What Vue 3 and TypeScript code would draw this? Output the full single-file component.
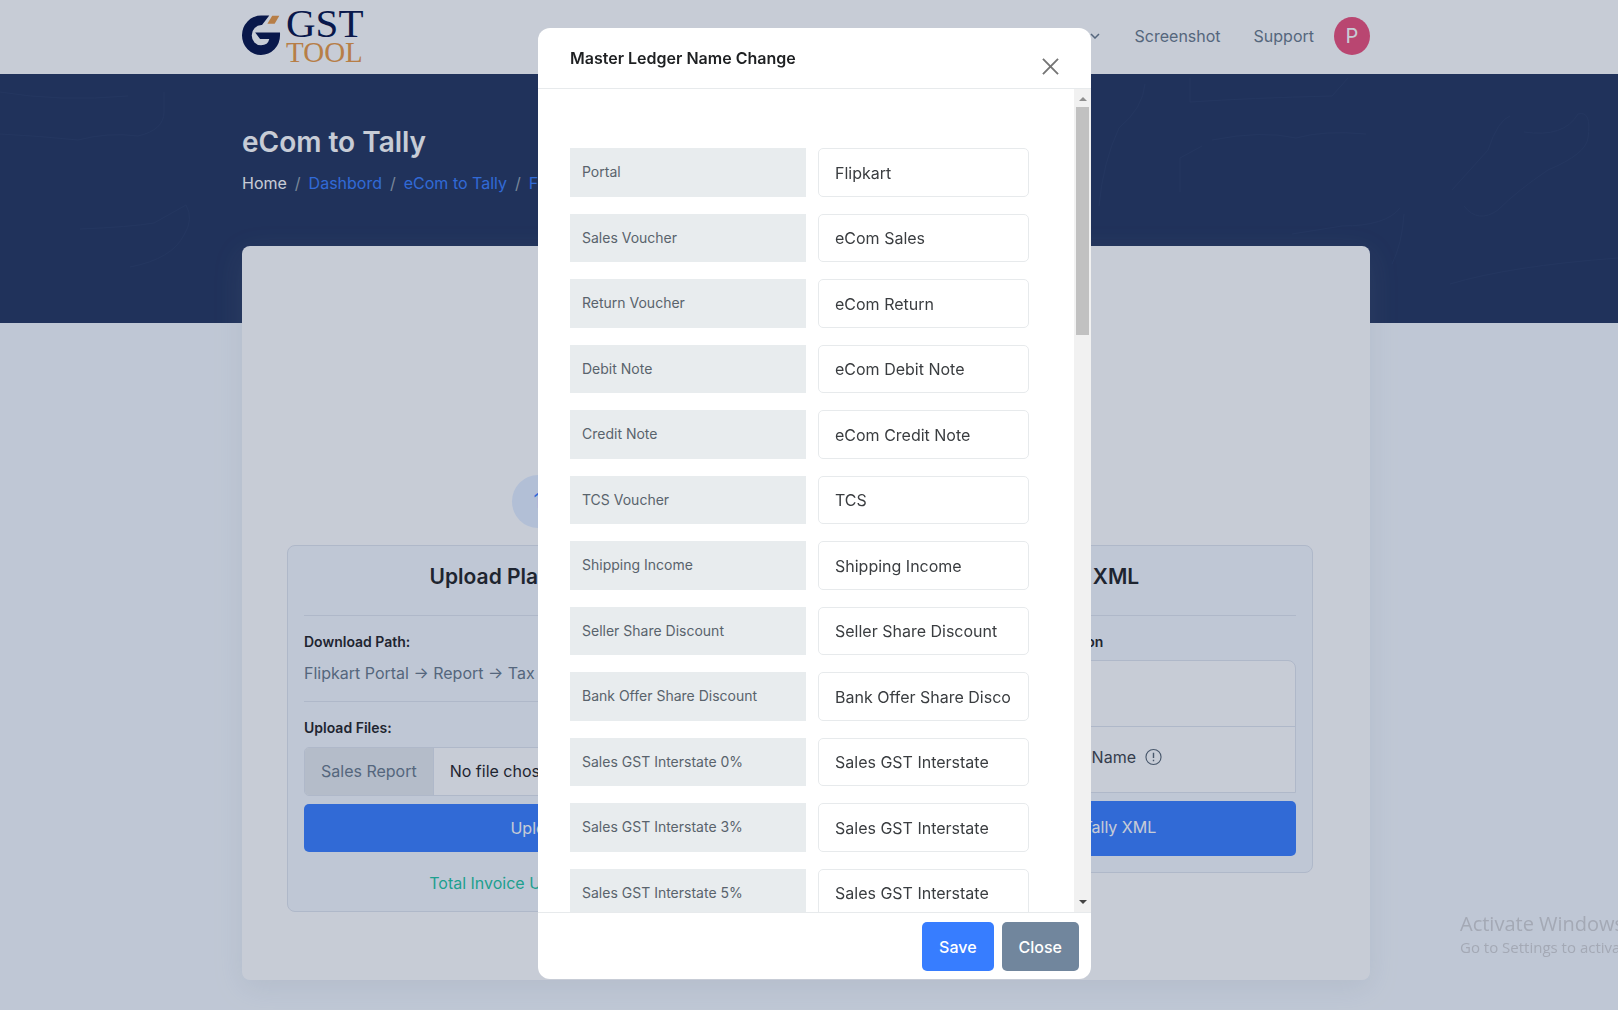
<script setup lang="ts">
import { reactive } from 'vue'

interface LedgerRow {
  label: string
  value: string
}

const crumbs: string[] = ['Dashbord', 'eCom to Tally', 'Flipkart']

const rows = reactive<LedgerRow[]>([
  { label: 'Portal', value: 'Flipkart' },
  { label: 'Sales Voucher', value: 'eCom Sales' },
  { label: 'Return Voucher', value: 'eCom Return' },
  { label: 'Debit Note', value: 'eCom Debit Note' },
  { label: 'Credit Note', value: 'eCom Credit Note' },
  { label: 'TCS Voucher', value: 'TCS' },
  { label: 'Shipping Income', value: 'Shipping Income' },
  { label: 'Seller Share Discount', value: 'Seller Share Discount' },
  { label: 'Bank Offer Share Discount', value: 'Bank Offer Share Discount' },
  { label: 'Sales GST Interstate 0%', value: 'Sales GST Interstate' },
  { label: 'Sales GST Interstate 3%', value: 'Sales GST Interstate' },
  { label: 'Sales GST Interstate 5%', value: 'Sales GST Interstate' },
])
</script>

<template>
  <div class="page">
    <header class="topbar">
      <div class="container topbar-inner">
        <a class="logo" href="#" aria-label="GST Tool">
          <svg class="logo-mark" viewBox="0 0 40 42" aria-hidden="true">
            <path
              d="M28 .5H19.5A19.5 20.3 0 0 0 0 21a19.5 20 0 0 0 39 0v-3H13.5l5 6.500h9.500a9 8 0 0 1-8.500 6.500A9.500 10 0 0 1 10 21a10 10.500 0 0 1 10.500-10.800z"
              fill="#020f46"
            />
            <path d="M31 .7h7.300L33.500 9H26z" fill="#ea9740" />
          </svg>
          <span class="logo-words">
            <span class="logo-gst">GST</span>
            <span class="logo-tool">TOOL</span>
          </span>
        </a>
        <nav class="nav">
          <button class="nav-more" type="button" aria-label="Open menu">
            <svg viewBox="0 0 10 6" aria-hidden="true">
              <path d="M1 1l4 4 4-4" fill="none" stroke="#677788" stroke-width="1.500" />
            </svg>
          </button>
          <a href="#">Screenshot</a>
          <a href="#">Support</a>
          <span class="avatar">P</span>
        </nav>
      </div>
    </header>

    <section class="hero">
      <svg class="hero-lines" viewBox="0 0 1618 249" preserveAspectRatio="none" aria-hidden="true">
        <g fill="none" stroke="#263862" stroke-width="1">
          <path d="M0 18q60 10 128 4M0 60q40 2 78 6 30-8 60-4 26-6 26-24V18" />
          <path d="M80 155q50-2 74-6l32-18q8 14-2 30-12 24-54 32" />
          <path d="M1145 10q-2 24-26 44-16 34-20 78M1190 4v24q60-4 142-6l16-18" />
          <path d="M1212 66q50-10 84-2 28-8 70-4M1180 118v-34l22-12" />
          <path d="M1452 116l36-40q10-30 22-34M1524 58q40 6 54-18 14-4 10 24-2 16-40 32-30 20-50 40-20 14-34-4" />
          <path d="M1292 160l50-8q44 0 58-18M1450 210q60-18 168-26M1392 190q10-20 12-50" />
        </g>
      </svg>
      <div class="container">
        <h1>eCom to Tally</h1>
        <nav class="crumbs" aria-label="Breadcrumb">
          <a class="home" href="#">Home</a>
          <template v-for="c in crumbs" :key="c">
            <span class="sep">/</span>
            <a href="#">{{ c }}</a>
          </template>
        </nav>
      </div>
    </section>

    <main class="container card">
      <div class="steps">
        <span class="step">1</span>
        <span class="step">2</span>
      </div>
      <div class="panels">
        <section class="panel">
          <h2>Upload Platform Files</h2>
          <hr />
          <h3>Download Path:</h3>
          <p class="path">Flipkart Portal → Report → Tax Report</p>
          <hr />
          <h3>Upload Files:</h3>
          <div class="file">
            <label for="sales-report">Sales Report</label>
            <input id="sales-report" type="file" />
          </div>
          <button class="primary" type="button">Upload</button>
          <p class="total">Total Invoice Uploaded : 260</p>
        </section>

        <section class="panel">
          <h2>Download XML</h2>
          <hr />
          <h3>Select Tally Ledger Configuration Option</h3>
          <ul class="options">
            <li></li>
            <li>
              <span>Master Ledger Name</span>
              <svg viewBox="0 0 18 18" aria-hidden="true">
                <circle cx="9" cy="9" r="8" fill="none" stroke="#566472" stroke-width="1.200" />
                <path d="M9 4.500v5.500M9 12v1.500" stroke="#566472" stroke-width="1.500" />
              </svg>
            </li>
          </ul>
          <button class="primary tall" type="button">Convert eCom Tally XML</button>
        </section>
      </div>
    </main>

    <div class="overlay">
      <div class="modal" role="dialog" aria-modal="true" aria-labelledby="modal-title">
        <div class="modal-head">
          <h2 id="modal-title">Master Ledger Name Change</h2>
          <button class="dismiss" type="button" aria-label="Dismiss">
            <svg viewBox="0 0 18 18" aria-hidden="true">
              <path d="M1 1l16 16M17 1L1 17" fill="none" stroke="#757575" stroke-width="2" />
            </svg>
          </button>
        </div>
        <div class="modal-body">
          <form class="ledger">
            <div v-for="(row, i) in rows" :key="row.label" class="row">
              <label :for="`ledger-${i}`">{{ row.label }}</label>
              <input :id="`ledger-${i}`" v-model="row.value" type="text" />
            </div>
          </form>
          <div class="scrollbar" aria-hidden="true">
            <svg viewBox="0 0 8 5"><path d="M0 5l4-4 4 4z" fill="#8f8f8f" /></svg>
            <div class="track"><div class="thumb"></div></div>
            <svg viewBox="0 0 8 5"><path d="M0 0l4 4 4-4z" fill="#444444" /></svg>
          </div>
        </div>
        <div class="modal-foot">
          <button class="save" type="button">Save</button>
          <button class="close" type="button">Close</button>
        </div>
      </div>
    </div>

    <div class="watermark">
      <p class="wm-title">Activate Windows</p>
      <p>Go to Settings to activate Windows.</p>
    </div>
  </div>
</template>

<style>
body {
  margin: 0;
  background: #f5f9fe;
}
</style>

<style scoped>
* {
  box-sizing: border-box;
}
.page {
  min-height: 100vh;
  padding-bottom: 30px;
  overflow: hidden;
  background: #f5f9fe;
  color: #677788;
  font-family: Inter, 'Liberation Sans', sans-serif;
  font-size: 16px;
  line-height: 24px;
}
h1,
h2,
h3,
p,
ul {
  margin: 0;
  padding: 0;
}
a {
  text-decoration: none;
  color: inherit;
}
button,
input {
  font: inherit;
}
.container {
  position: relative;
  left: -3px;
  width: calc(100% - 32px);
  max-width: 1128px;
  margin: 0 auto;
}
.topbar {
  background: #ffffff;
}
.topbar-inner {
  display: flex;
  justify-content: space-between;
  align-items: center;
  height: 74px;
  padding-bottom: 2px;
}
.logo {
  display: flex;
  gap: 5px;
}
.logo-mark {
  width: 39px;
  height: 41px;
  margin-top: 7px;
}
.logo-words {
  display: flex;
  flex-direction: column;
  font-family: 'Liberation Serif', serif;
}
.logo-gst {
  color: #020f46;
  font-size: 41px;
  line-height: 31px;
}
.logo-tool {
  color: #ea9740;
  font-size: 29px;
  line-height: 26px;
}
.nav {
  display: flex;
  align-items: center;
}
.nav a {
  margin-right: 33px;
}
.nav a:last-of-type {
  margin-right: 20px;
}
.nav-more {
  display: flex;
  margin: 0 35px 0 0;
  padding: 0;
  border: 0;
  background: none;
}
.nav-more svg {
  width: 10px;
  height: 6px;
}
.avatar {
  width: 36px;
  height: 38px;
  border-radius: 50%;
  background: #ed4c78;
  color: #ffffff;
  font-size: 20px;
  line-height: 38px;
  text-align: center;
}
.hero {
  position: relative;
  height: 249px;
  padding-top: 51px;
  background: #21325b;
}
.hero-lines {
  position: absolute;
  inset: 0;
  width: 100%;
  height: 100%;
}
.hero h1 {
  color: #ffffff;
  font-size: 28px;
  font-weight: 600;
  line-height: 34px;
}
.crumbs {
  display: flex;
  gap: 8px;
  margin-top: 12px;
  color: #377dff;
}
.crumbs .home {
  color: #ffffff;
}
.crumbs .sep {
  color: #97a4af;
}
.card {
  min-height: 734px;
  margin-top: -77px;
  padding: 229px 57px 0 45px;
  border-radius: 8px;
  background: #ffffff;
  box-shadow: 0 8px 30px rgba(140, 152, 164, 0.15);
}
.steps {
  display: grid;
  grid-template-columns: 1fr 1fr;
  gap: 24px;
  justify-items: center;
}
.step {
  width: 52px;
  height: 53px;
  border-radius: 50%;
  background: #e3eeff;
  color: #377dff;
  font-size: 20px;
  line-height: 53px;
  text-align: center;
}
.panels {
  display: grid;
  grid-template-columns: 1fr 1fr;
  align-items: start;
  gap: 24px;
  margin-top: 17px;
}
.panel {
  min-width: 0;
  padding: 16px;
  border: 1px solid #dfe4ee;
  border-radius: 8px;
  background: #f5f9fe;
}
.panel h2 {
  color: #1e2022;
  font-size: 21px;
  font-weight: 600;
  line-height: 30px;
  text-align: center;
}
.panel h3 {
  color: #1e2022;
  font-size: 14px;
  font-weight: 600;
  line-height: 20px;
}
hr {
  height: 1px;
  margin: 16px 0;
  border: 0;
  background: #dfe4ee;
}
.panel h2 + hr {
  margin-top: 23px;
}
.path {
  margin-top: 9px;
  overflow: hidden;
  white-space: nowrap;
}
.file {
  display: flex;
  height: 49px;
  margin-top: 9px;
  border: 1px solid #dfe4ee;
  border-radius: 5px;
  background: #ffffff;
  overflow: hidden;
}
.file label {
  flex: none;
  padding: 0 16px;
  border-right: 1px solid #dfe4ee;
  background: #e6eaee;
  line-height: 47px;
}
.file input {
  flex: 1;
  min-width: 0;
  padding: 0 16px;
  color: #1e2022;
  line-height: 47px;
}
.file input::file-selector-button {
  display: none;
}
.primary {
  display: block;
  width: 100%;
  height: 48px;
  margin-top: 8px;
  padding: 0;
  border: 0;
  border-radius: 5px;
  background: #377dff;
  color: #ffffff;
}
.primary.tall {
  height: 55px;
  padding-bottom: 4px;
}
.total {
  margin-top: 19px;
  color: #1cc4a0;
  text-align: center;
}
.options {
  margin-top: 8px;
  border: 1px solid #dfe4ee;
  border-radius: 8px 8px 0 0;
  background: #ffffff;
  list-style: none;
}
.options li {
  display: flex;
  align-items: center;
  justify-content: flex-end;
  gap: 9px;
  height: 65px;
  padding: 0 133px 6px 0;
  color: #3b4147;
}
.options li + li {
  height: 66px;
  border-top: 1px solid #dfe4ee;
}
.options svg {
  width: 17px;
  height: 18px;
}
.overlay {
  position: fixed;
  inset: 0;
  display: flex;
  justify-content: center;
  padding: 28px 0 31px 11px;
  background: rgba(33, 50, 91, 0.25);
}
.modal {
  display: flex;
  flex-direction: column;
  width: 100%;
  max-width: 553px;
  border-radius: 12px;
  background: #ffffff;
  overflow: hidden;
}
.modal-head {
  display: flex;
  justify-content: space-between;
  height: 61px;
  padding: 18px 32px 0;
  border-bottom: 1px solid #e7eaec;
}
.modal-head h2 {
  color: #1e2022;
  font-size: 16px;
  font-weight: 600;
  line-height: 24px;
}
.dismiss {
  display: flex;
  align-self: flex-start;
  margin-top: 12px;
  padding: 0;
  border: 0;
  background: none;
}
.dismiss svg {
  width: 17px;
  height: 17px;
}
.modal-body {
  display: flex;
  flex: 1;
  min-height: 0;
  overflow: hidden;
}
.ledger {
  flex: 1;
  padding: 59px 45px 0 32px;
}
.row {
  display: grid;
  grid-template-columns: 236fr 211fr;
  gap: 12px;
  height: 49px;
  margin-bottom: 17px;
}
.row:nth-child(even) {
  height: 48px;
}
.row label {
  padding: 12px;
  background: #e8ecee;
  color: #59636c;
  font-size: 14px;
  line-height: 23px;
}
.row input {
  width: 100%;
  min-width: 0;
  padding: 0 16px;
  border: 1px solid #e7eaec;
  border-radius: 5px;
  background: #ffffff;
  color: #3a3d40;
}
.scrollbar {
  display: flex;
  flex-direction: column;
  align-items: center;
  justify-content: space-between;
  width: 17px;
  padding: 7px 0;
  background: #f1f1f1;
}
.scrollbar svg {
  width: 8px;
  height: 5px;
}
.track {
  flex: 1;
  width: 13px;
  margin: 6px 0;
}
.thumb {
  height: 29%;
  background: #c1c1c1;
}
.modal-foot {
  display: flex;
  justify-content: flex-end;
  gap: 8px;
  padding: 9px 12px 8px;
  border-top: 1px solid #e7eaec;
}
.modal-foot button {
  height: 49px;
  padding: 0 17px;
  border: 0;
  border-radius: 5px;
  color: #ffffff;
  font-weight: 500;
}
.save {
  background: #377dff;
}
.close {
  background: #71869d;
}
.watermark {
  position: fixed;
  right: 0;
  bottom: 52px;
  width: 158px;
  overflow: hidden;
  color: #a4a9b5;
  font-family: 'Open Sans', 'Noto Sans', sans-serif;
  font-size: 15px;
  line-height: 22px;
  white-space: nowrap;
}
.wm-title {
  font-size: 20px;
  line-height: 25px;
}
</style>
